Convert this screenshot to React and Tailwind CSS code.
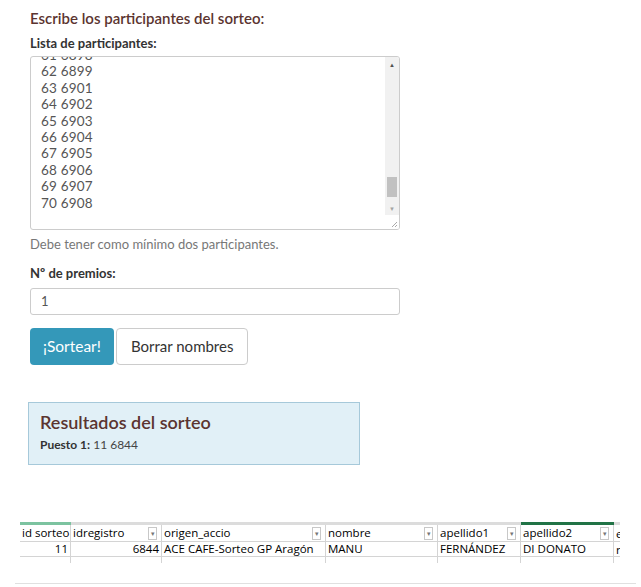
import React from 'react';

const lines = ['61 6898', '62 6899', '63 6901', '64 6902', '65 6903', '66 6904', '67 6905', '68 6906', '69 6907', '70 6908'];

const cols = [
  { name: 'id sorteo', w: 51, val: '11', right: true, filter: false },
  { name: 'idregistro', w: 91, val: '6844', right: true, filter: true },
  { name: 'origen_accio', w: 164, val: 'ACE CAFE-Sorteo GP Aragón', filter: true },
  { name: 'nombre', w: 112, val: 'MANU', filter: true },
  { name: 'apellido1', w: 83, val: 'FERNÁNDEZ', filter: true },
  { name: 'apellido2', w: 93, val: 'DI DONATO', filter: true },
];

function FilterBox() {
  return (
    <span className="ml-auto mr-[4px] flex h-[13px] w-[9px] items-center justify-center border border-[#c8c8c8] bg-white text-[7px] leading-none text-[#777]">▾</span>
  );
}

export default function App() {
  return (
    <div className="min-h-[587px] w-[641px] bg-white font-['Lato',sans-serif] text-[#333]">
      <div className="px-[30px] pt-[8px]">
        <h2 className="text-[15px] font-semibold leading-[20px] text-[#5b3430]">Escribe los participantes del sorteo:</h2>
        <p className="mt-[7px] text-[13px] font-bold leading-[17px] text-[#333]">Lista de participantes:</p>

        <div className="mt-[4px] flex h-[174px] w-[370px] overflow-hidden rounded-[3px] border border-[#ccc] bg-white">
          <div className="flex-1 overflow-hidden pl-[10px]">
            <div className="mt-[-10px] text-[13.5px] leading-[16.4px] tracking-[0.2px] text-[#555]">
              {lines.map((l) => (
                <div key={l}>{l}</div>
              ))}
            </div>
          </div>
          <div className="flex w-[14px] flex-col bg-[#f1f1f1]">
            <div className="flex h-[14px] items-center justify-center text-[6px] text-[#505050]">▲</div>
            <div className="relative flex-1">
              <div className="absolute bottom-[4px] left-[2px] h-[20px] w-[10px] bg-[#c1c1c1]"></div>
            </div>
            <div className="flex h-[14px] items-center justify-center text-[6px] text-[#a3a3a3]">▼</div>
            <div className="flex h-[14px] items-end justify-end bg-white pb-[1px] pr-[1px]">
              <svg width="8" height="8" viewBox="0 0 8 8">
                <path d="M7 2 L2 7 M7 5 L5 7" stroke="#aaa" strokeWidth="1" />
              </svg>
            </div>
          </div>
        </div>

        <p className="mt-[6px] text-[13px] leading-[16px] text-[#777]">Debe tener como mínimo dos participantes.</p>

        <p className="mt-[13px] text-[13px] font-bold leading-[17px] text-[#333]">Nº de premios:</p>
        <div className="mt-[6px] flex h-[27px] w-[370px] items-center rounded-[3px] border border-[#ccc] px-[10px] text-[13px] text-[#555]">1</div>

        <div className="mt-[13px] flex gap-[2px]">
          <button className="h-[37px] rounded-[4px] bg-[#3498b9] px-[13px] text-[15.5px] text-white">¡Sortear!</button>
          <button className="h-[37px] rounded-[4px] border border-[#ccc] bg-white px-[14px] text-[15px] text-[#333]">Borrar nombres</button>
        </div>
      </div>

      <div className="ml-[28px] mt-[37px] h-[63px] w-[332px] border border-[#a6c9da] bg-[#e1f0f7] px-[11px] pt-[8px]">
        <h3 className="text-[18px] font-semibold leading-[23px] text-[#5b3430]">Resultados del sorteo</h3>
        <p className="mt-[3px] text-[12px] leading-[15px] text-[#444]">
          <span className="font-bold text-[#333]">Puesto 1:</span> 11 6844
        </p>
      </div>

      <div className="ml-[20px] mt-[57px] w-[600px] overflow-hidden font-['Open_Sans',sans-serif] text-[11.5px] text-black">
        <div className="flex h-[3px]">
          <div className="w-[51px] bg-[#7cc3a0]"></div>
          <div className="w-[450px] bg-[#dcdcdc]"></div>
          <div className="w-[93px] bg-[#217346]"></div>
          <div className="flex-1 bg-[#dcdcdc]"></div>
        </div>
        <div className="flex h-[17px] border-b border-[#d4d4d4]">
          {cols.map((c) => (
            <div key={c.name} style={{ width: c.w }} className="flex shrink-0 items-center border-r border-[#d4d4d4] pl-[2px] leading-none">
              <span className="whitespace-nowrap">{c.name}</span>
              {c.filter && <FilterBox />}
            </div>
          ))}
          <div className="pl-[2px] leading-[17px]">e</div>
        </div>
        <div className="flex h-[15px] border-b border-[#d4d4d4]">
          {cols.map((c) => (
            <div key={c.name} style={{ width: c.w }} className={`flex shrink-0 items-center border-r border-[#d4d4d4] px-[2px] leading-none ${c.right ? 'justify-end' : ''}`}>
              <span className="whitespace-nowrap">{c.val}</span>
            </div>
          ))}
          <div className="pl-[2px] leading-[15px]">r</div>
        </div>
        <div className="flex h-[6px]">
          {cols.map((c) => (
            <div key={c.name} style={{ width: c.w }} className="shrink-0 border-r border-[#d4d4d4]"></div>
          ))}
        </div>
      </div>

      <div className="ml-[15px] mt-[20px] h-[1px] w-[621px] bg-[#e0e0e0]"></div>
    </div>
  );
}
